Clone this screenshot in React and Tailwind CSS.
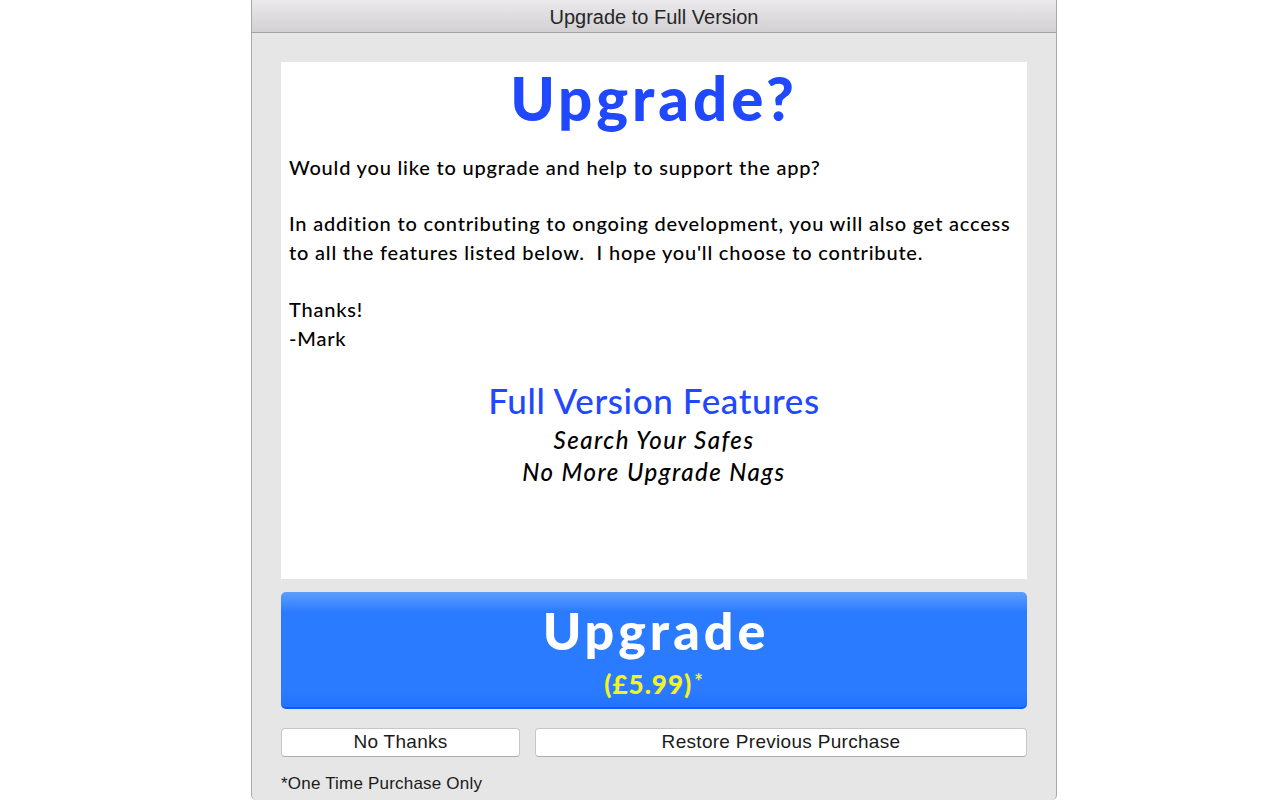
export default function App() {
  const futura = { fontFamily: '"Lato", "Noto Sans", sans-serif' };
  const sans = { fontFamily: '"Liberation Sans", sans-serif' };
  return (
    <div className="w-[1280px] h-[800px] bg-white flex overflow-hidden">
      <div className="w-[806px] h-[800px] ml-[251px] bg-[#e6e6e6] border-x border-[#a9a9a9] rounded-b-[5px] flex flex-col overflow-hidden">
        <div className="h-[33px] shrink-0 bg-gradient-to-b from-[#ebe9eb] to-[#d2d0d2] border-b border-[#a3a3a3] flex items-center justify-center">
          <span className="text-[20px] text-[#262626] mt-[1px]" style={sans}>Upgrade to Full Version</span>
        </div>
        <div className="flex flex-col px-[29px] pt-[29px]">
          <div className="h-[517px] bg-white flex flex-col px-[8px]" style={futura}>
            <div className="text-center text-[#1f48ff] font-black text-[60px] leading-[66px] mt-[3px] tracking-[4px]">Upgrade?</div>
            <div className="text-[20px] leading-[29px] text-black mt-[22px] font-medium tracking-[0.8px]">
              <p>Would you like to upgrade and help to support the app?</p>
              <p className="mt-[27px]">In addition to contributing to ongoing development, you will also get access to all the features listed below.&nbsp; I hope you'll choose to contribute.</p>
              <p className="mt-[28px]">Thanks!</p>
              <p>-Mark</p>
            </div>
            <div className="text-center mt-[27px]">
              <div className="text-[#1f48ff] text-[35px] leading-[40px] font-medium tracking-[0.6px]">Full Version Features</div>
              <div className="italic text-[24px] leading-[32px] text-black font-medium tracking-[1.5px] mt-[4px]">Search Your Safes</div>
              <div className="italic text-[24px] leading-[32px] text-black font-medium tracking-[1.5px]">No More Upgrade Nags</div>
            </div>
          </div>
          <div className="mt-[13px] h-[117px] rounded-[5px] border-b-2 border-[#0b5cff] flex flex-col items-center" style={{ backgroundImage: 'linear-gradient(#5e9efd 0px, #3a86ff 14px, #2a7bff 20px, #2a7bff 100px, #2373ff 113px)' }}>
            <div className="text-white font-black text-[52px] leading-[60px] mt-[8px] tracking-[4px] pl-[4px]" style={futura}>Upgrade</div>
            <div className="text-[#f5f51a] font-black text-[26px] leading-[30px] mt-[9px] tracking-[1px]" style={futura}>(£5.99)<span className="text-[20px] relative top-[-5px] ml-[2px]">*</span></div>
          </div>
          <div className="flex gap-[15px] mt-[19px]" style={sans}>
            <div className="w-[239px] h-[29px] bg-white border border-[#c6c6c6] border-b-[#acacac] rounded-[4px] flex items-center justify-center text-[19px] tracking-[0.3px] text-[#1a1a1a]">No Thanks</div>
            <div className="flex-1 h-[29px] bg-white border border-[#c6c6c6] border-b-[#acacac] rounded-[4px] flex items-center justify-center text-[19px] tracking-[0.3px] text-[#1a1a1a]">Restore Previous Purchase</div>
          </div>
          <div className="mt-[14px] text-[17px] text-[#1a1a1a] tracking-[0.2px]" style={sans}>*One Time Purchase Only</div>
        </div>
      </div>
    </div>
  );
}
